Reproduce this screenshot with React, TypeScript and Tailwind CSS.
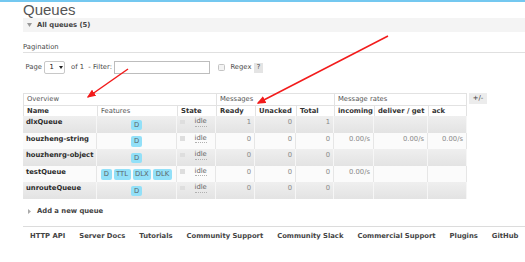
import React from 'react';

const cols = 'grid grid-cols-[74px_80px_39px_39px_41px_38px_40px_54px_39px]';

const queues = [
  { name: 'dlxQueue', features: ['D'], ready: '1', unacked: '0', total: '1', rates: ['', '', ''] },
  { name: 'houzheng-string', features: ['D'], ready: '0', unacked: '0', total: '0', rates: ['0.00/s', '0.00/s', '0.00/s'] },
  { name: 'houzhenrg-object', features: ['D'], ready: '0', unacked: '0', total: '0', rates: ['', '', ''] },
  { name: 'testQueue', features: ['D', 'TTL', 'DLX', 'DLK'], ready: '0', unacked: '0', total: '0', rates: ['0.00/s', '', ''] },
  { name: 'unrouteQueue', features: ['D'], ready: '0', unacked: '0', total: '0', rates: ['', '', ''] },
];

const footerLinks = ['HTTP API', 'Server Docs', 'Tutorials', 'Community Support', 'Community Slack', 'Commercial Support', 'Plugins', 'GitHub'];

const App = () => {
  return (
    <div className="relative w-[525px] h-[262px] overflow-hidden bg-white font-['DejaVu_Sans',Verdana,sans-serif] text-[6.8px] text-[#484848]">
      <div className="h-[2px] bg-[#74c8f0]" />

      <div className="pl-[23px]">
        <h1 className="h-[16px] font-['Liberation_Sans',Arial,sans-serif] text-[15px] leading-[16px] text-[#555]">Queues</h1>

        {/* all queues bar */}
        <div className="flex h-[14px] items-center bg-[#f4f4f4] pl-[4px] font-bold text-[#444]">
          <svg width="5" height="4" viewBox="0 0 5 4" className="mr-[5px]">
            <polygon points="0,0 5,0 2.5,4" fill="#999" />
          </svg>
          <span>All queues (5)</span>
        </div>

        <div className="border-b border-[#e0e0e0] pt-[10px] leading-[10px]">Pagination</div>

        {/* page row */}
        <div className="mt-[8px] flex h-[13px] items-center pl-[2.5px]">
          <span>Page</span>
          <div className="ml-[2.5px] flex h-[13px] w-[21px] items-center rounded-[2px] border border-[#c8c8c8] bg-white pl-[4px]">
            <span className="text-[#222]">1</span>
            <svg width="4" height="3" viewBox="0 0 4 3" className="ml-[5px]">
              <polygon points="0,0 4,0 2,3" fill="#222" />
            </svg>
          </div>
          <span className="ml-[5.5px]">of 1&nbsp; - Filter:</span>
          <div className="ml-[2.5px] h-[13px] w-[96px] border border-[#bdbdbd] bg-white" />
          <div className="ml-[8px] h-[7px] w-[7px] rounded-[1.5px] border border-[#c4c4c4] bg-[#f3f3f3]" />
          <span className="ml-[5px]">Regex</span>
          <span className="ml-[2.5px] flex h-[10px] w-[9px] items-center justify-center bg-[#e4e4e4] text-[#555]">?</span>
        </div>

        {/* table */}
        <div className="mt-[19px] flex items-start">
          <div className="w-[444px]">
            <div className={`${cols} h-[11.5px] leading-[11px] text-[#555]`}>
              <div className="col-span-3 border-l border-t border-[#e2e2e2] pl-[3px]">Overview</div>
              <div className="col-span-3 border-l border-t border-[#e2e2e2] pl-[3px]">Messages</div>
              <div className="col-span-3 border-x border-t border-[#e2e2e2] pl-[3px]">Message rates</div>
            </div>
            <div className={`${cols} h-[11.5px] border-t border-[#e2e2e2] leading-[10.5px] font-bold text-[#333]`}>
              <div className="border-l border-[#e2e2e2] pl-[3px]">Name</div>
              <div className="border-l border-[#e2e2e2] pl-[3px] font-normal text-[#555]">Features</div>
              <div className="border-l border-[#e2e2e2] pl-[3px]">State</div>
              <div className="border-l border-[#e2e2e2] pl-[3px]">Ready</div>
              <div className="border-l border-[#e2e2e2] pl-[3px]">Unacked</div>
              <div className="border-l border-[#e2e2e2] pl-[3px]">Total</div>
              <div className="border-l border-[#e2e2e2] pl-[3px]">incoming</div>
              <div className="border-l border-[#e2e2e2] pl-[3px]">deliver / get</div>
              <div className="border-x border-[#e2e2e2] pl-[3px]">ack</div>
            </div>

            {queues.map((q, i) => {
              const odd = i % 2 === 0;
              const sep = odd ? 'border-r border-[#f6f6f6]' : 'border-r border-[#e6e6e6]';
              return (
                <div
                  key={q.name}
                  className={`${cols} h-[16.5px] leading-[8px] ${odd ? 'bg-linear-to-b from-[#efefef] to-[#e3e3e3]' : 'bg-[#fbfbfb]'}`}
                >
                  <div className={`${sep} pl-[3px] pt-[2px] font-bold text-[#2a2a2a]`}>{q.name}</div>
                  <div className={`${sep} flex justify-center gap-[2px] pt-[3.5px]`}>
                    {q.features.map((f) => (
                      <span key={f} className="flex h-[10.5px] items-center rounded-[2px] bg-[#92e0f8] px-[2.5px] text-[#5b6468]">
                        {f}
                      </span>
                    ))}
                  </div>
                  <div className={`${sep} flex items-start pl-[3px] pt-[2px]`}>
                    <span className="mt-[1.5px] h-[4.5px] w-[4.5px] bg-[#dedede]" />
                    <span className="ml-[10px] border-b border-dotted border-[#b0b0b0] leading-[7.5px] text-[#666]">idle</span>
                  </div>
                  <div className={`${sep} pr-[3px] pt-[2px] text-right text-[#888]`}>{q.ready}</div>
                  <div className={`${sep} pr-[3px] pt-[2px] text-right text-[#888]`}>{q.unacked}</div>
                  <div className={`${sep} pr-[3px] pt-[2px] text-right text-[#888]`}>{q.total}</div>
                  {q.rates.map((r, j) => (
                    <div key={j} className={`${sep} pr-[3px] pt-[2px] text-right text-[#888]`}>{r}</div>
                  ))}
                </div>
              );
            })}
          </div>
          <div className="ml-[2px] flex h-[10.5px] w-[18px] items-center justify-center bg-[#ececec] text-[#444]">+/-</div>
        </div>

        {/* add a new queue */}
        <div className="mt-[8px] flex h-[10px] items-center pl-[5px] font-bold text-[#444]">
          <svg width="3" height="5" viewBox="0 0 3 5" className="mr-[6px]">
            <polygon points="0,0 3,2.5 0,5" fill="#aaa" />
          </svg>
          <span>Add a new queue</span>
        </div>

        {/* footer */}
        <div className="mt-[9.5px] border-t border-[#dcdcdc] pt-[4.5px]">
          <div className="flex h-[10px] items-center gap-[14px] pl-[7px] font-bold text-[#444]">
            {footerLinks.map((l) => (
              <span key={l} className="whitespace-nowrap">{l}</span>
            ))}
          </div>
        </div>
      </div>

      {/* red annotation arrows */}
      <svg className="pointer-events-none absolute left-0 top-0" width="525" height="262">
        <defs>
          <marker id="head" markerWidth="6" markerHeight="5" refX="5" refY="2.5" orient="auto" markerUnits="strokeWidth">
            <polygon points="0,0 6,2.5 0,5" fill="#f21b1b" />
          </marker>
        </defs>
        <line x1="388" y1="36" x2="258" y2="103" stroke="#f21b1b" strokeWidth="1.5" markerEnd="url(#head)" />
        <line x1="128" y1="69" x2="88" y2="97" stroke="#f21b1b" strokeWidth="1.5" markerEnd="url(#head)" />
      </svg>
    </div>
  );
};

export default App;
